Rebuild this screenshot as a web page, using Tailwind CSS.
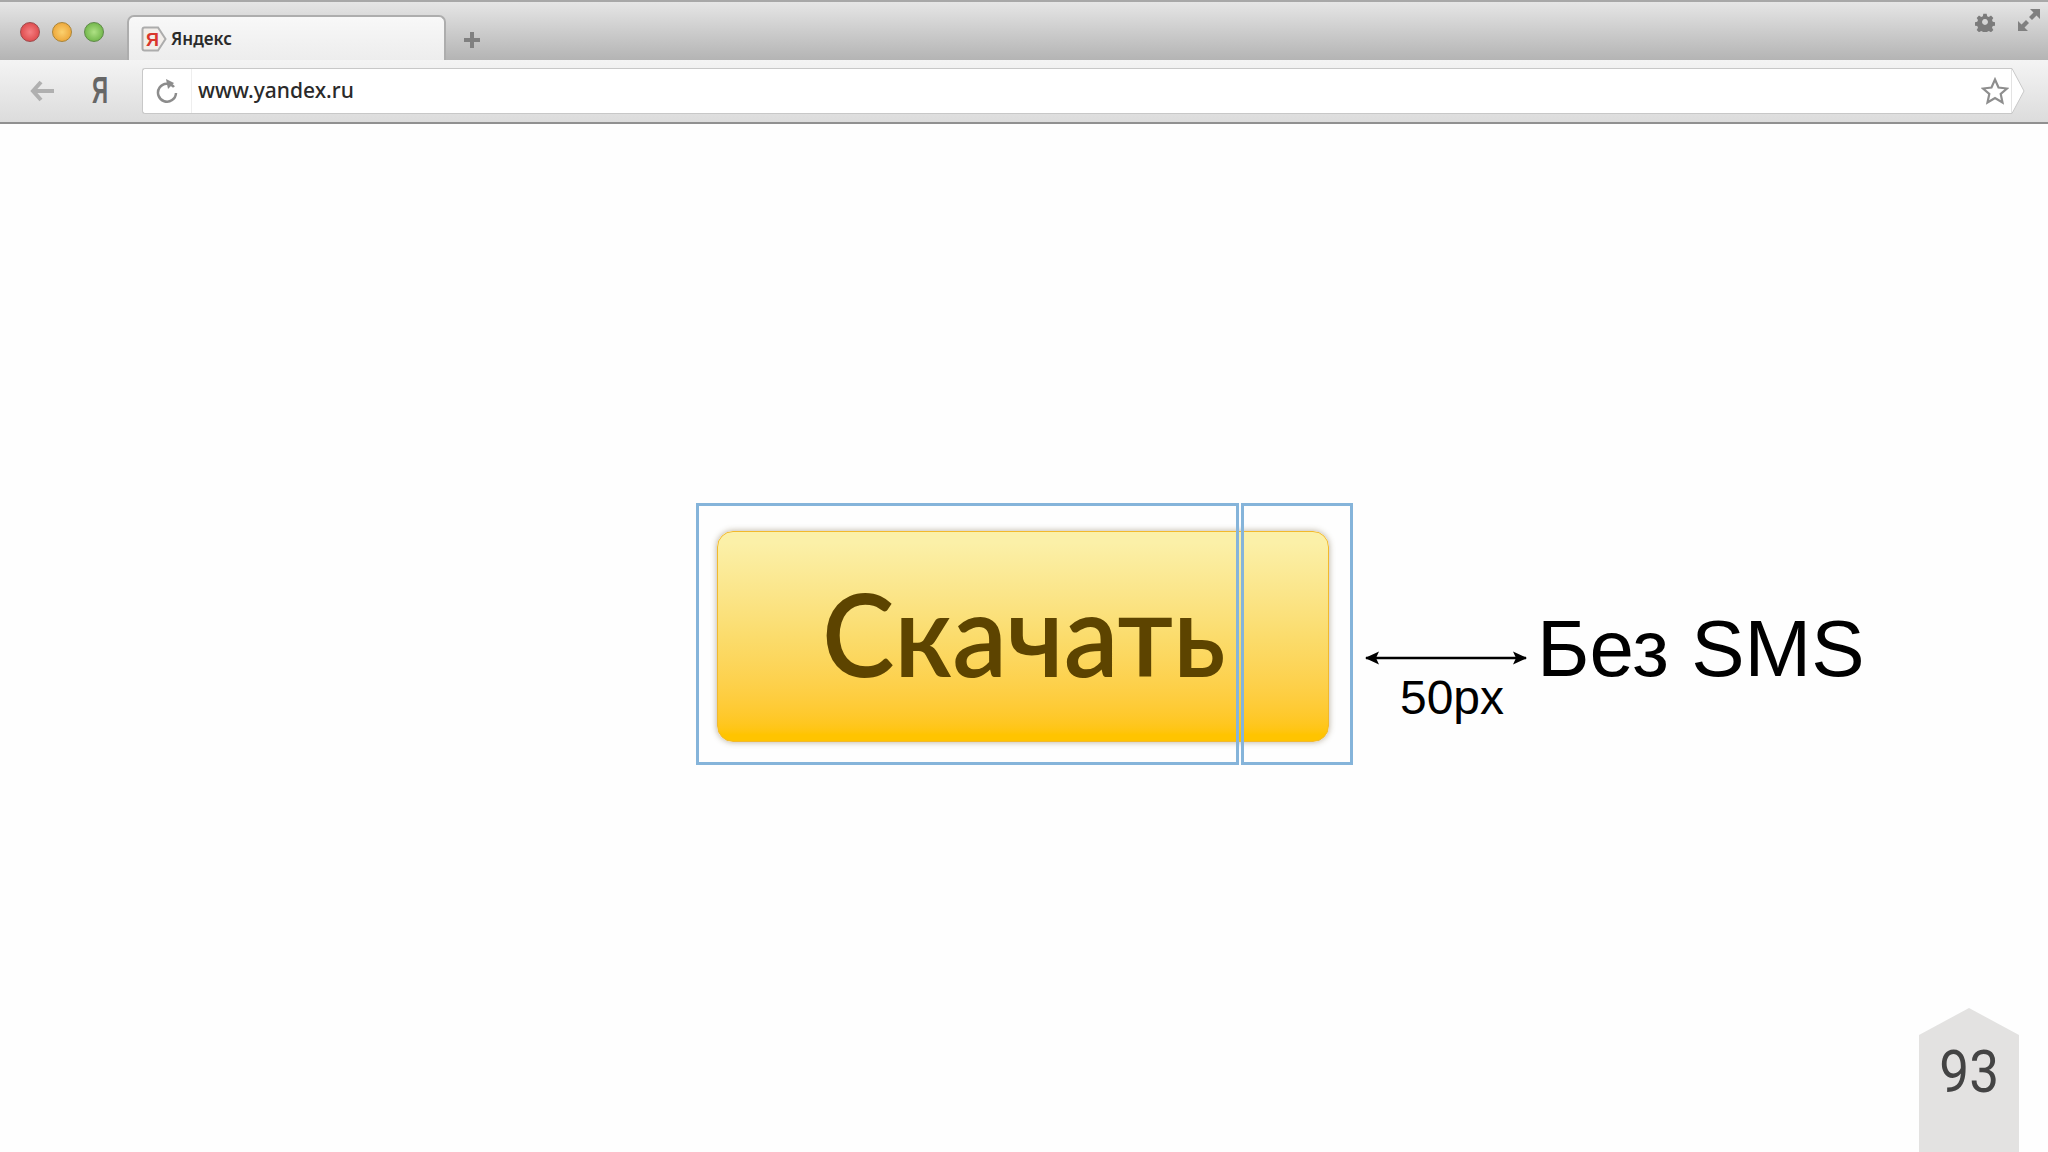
<!DOCTYPE html>
<html><head><meta charset="utf-8"><script src="https://cdn.jsdelivr.net/npm/@tailwindcss/browser@4"></script></head>
<body class="bg-white">
<div class="relative w-[2048px] h-[1152px] overflow-hidden bg-[#fefefe] font-['Liberation_Sans',sans-serif]">
  <header class="flex flex-col w-full">
    <div class="h-[60px] flex items-end bg-linear-to-b from-[#e6e6e6] to-[#b4b4b4] border-t-2 border-[#a8a8a8] relative">
      <div class="flex gap-[12px] items-center pl-[20px] w-[127px] self-start mt-[20px]">
        <span class="w-[20px] h-[20px] shrink-0 rounded-full bg-radial from-[#f57f82] to-[#d6353b] border border-[#9c4a4c]"></span>
        <span class="w-[20px] h-[20px] shrink-0 rounded-full bg-radial from-[#fbd16e] to-[#e8991f] border border-[#a98438]"></span>
        <span class="w-[20px] h-[20px] shrink-0 rounded-full bg-radial from-[#aee184] to-[#5ea936] border border-[#5e8a48]"></span>
      </div>
      <div class="w-[319px] h-[45px] rounded-t-[7px] border-2 border-b-0 border-[#adadad] bg-linear-to-b from-[#f8f8f8] to-[#ededed] flex items-center pl-[12px] gap-[4px]">
        <svg width="26" height="26" viewBox="0 0 26 26" class="shrink-0"><path d="M1.500 3.500 Q1.500 1.500 3.500 1.500 H17 L24.500 13 L17 24.500 H3.500 Q1.500 24.500 1.500 22.500Z" fill="#f2eeea" stroke="#acacac" stroke-width="2"/><text x="5" y="20" font-size="18" font-weight="700" fill="#d9362b" font-family="Liberation Sans">Я</text></svg>
        <span class="text-[17px] text-[#2a2a2a] font-['Noto_Sans',sans-serif] font-semibold">Яндекс</span>
      </div>
      <svg width="20" height="20" viewBox="0 0 20 20" class="ml-[16px] mb-[10px]"><path d="M10 2V18M2 10H18" stroke="#808080" stroke-width="4"/></svg>
      <svg width="20" height="20" viewBox="0 0 24 24" class="absolute left-[1975px] top-[10px]"><path fill-rule="evenodd" fill="#7b7b7b" d="M10 2h4l.6 3 2 .9 2.600-1.600 2.800 2.800-1.600 2.600.9 2 3 .6v4l-3 .6-.9 2 1.600 2.600-2.800 2.800-2.600-1.600-2 .9-.6 3h-4l-.6-3-2-.9-2.600 1.600-2.800-2.800 1.600-2.600-.9-2-3-.6v-4l3-.6.9-2-1.600-2.600 2.800-2.800 2.600 1.600 2-.9zM12 8.500a3.500 3.500 0 1 0 .01 0z"/></svg>
      <svg width="24" height="24" viewBox="0 0 24 24" class="absolute left-[2017px] top-[6px]"><path fill="#808080" d="M13 1H23V11L19.500 7.500 15 12 12 9 16.500 4.500zM1 13L1 23H11L7.500 19.500 12 15 9 12 4.500 16.500z"/></svg>
    </div>
    <div class="h-[64px] flex items-center bg-linear-to-b from-[#f4f4f4] to-[#dcdcdc] border-b-2 border-[#909090] pb-[1px]">
      <div class="w-[142px] shrink-0 flex items-center">
        <svg width="24" height="22" viewBox="0 0 24 22" class="ml-[30px]"><path d="M11 2L3 11L11 20M3 11H24" fill="none" stroke="#b0b0b0" stroke-width="4"/></svg>
        <span class="ml-[33px] inline-block text-[36px] leading-none text-[#666] font-['Liberation_Sans',sans-serif] font-bold scale-x-[0.62]">Я</span>
      </div>
      <div class="flex items-center h-[46px] w-[1870px] relative bg-white border border-[#c8c8c8] border-r-0 rounded-l-[3px]">
        <div class="w-[49px] h-full flex items-center justify-center border-r border-[#eeeeee]">
          <svg width="24" height="26" viewBox="0 0 24 26"><path d="M19 9A9 9 0 1 0 21 15" fill="none" stroke="#8c8c8c" stroke-width="2.500"/><path d="M11 1L19 5 13 11z" fill="#8c8c8c"/></svg>
        </div>
        <span class="ml-[6px] text-[21px] text-[#2a2a2a] font-['Noto_Sans',sans-serif] font-medium">www.yandex.ru</span>
        <svg width="28" height="28" viewBox="0 0 28 28" class="ml-auto mr-[3px]"><path d="M14 2.500L17.500 10.500 26 11.500 19.700 17 21.500 25.500 14 21 6.500 25.500 8.300 17 2 11.500 10.500 10.500z" fill="#fff" stroke="#8e8e8e" stroke-width="2.200"/></svg>
        <svg width="14" height="46" viewBox="0 0 14 46" class="absolute -right-[13px] -top-[1px]"><path d="M0 .5H1L13 23 1 45.500H0z" fill="#fff" stroke="#c8c8c8"/></svg>
      </div>
    </div>
  </header>

  <main class="absolute left-[696px] top-[503px] w-[660px] h-[262px]">
    <div class="absolute left-[21px] top-[28px] w-[612px] h-[211px] rounded-[16px] border border-[#f2b92c] bg-linear-to-b from-[#fbf0a8] from-5% via-[#fbdc6c] via-50% to-[#ffc400] to-97% shadow-[0_0_6px_rgba(90,70,30,0.45)] flex items-center pl-[104px]">
      <span class="inline-block mb-[7px] text-[116px] leading-none text-[#5d4400] font-['Lato','Roboto',sans-serif] font-semibold origin-left scale-x-[0.94]">Скачать</span>
    </div>
    <div class="relative flex gap-[2px]">
      <div class="w-[543px] h-[262px] border-[3px] border-[#85b4da]"></div>
      <div class="w-[112px] h-[262px] border-[3px] border-[#85b4da]"></div>
    </div>
  </main>

  <div class="absolute left-[1364px] top-[606px] flex items-start gap-[9px]">
    <div class="flex flex-col items-center w-[164px]">
      <svg width="164" height="20" viewBox="0 0 164 20" class="mt-[42px]"><path d="M2 10H162" stroke="#000" stroke-width="2.500"/><path d="M1 10L15 3.500 12 10 15 16.500zM163 10L149 3.500 152 10 149 16.500z" fill="#000"/></svg>
      <span class="text-[48px] leading-none text-black ml-[12px] mt-[6px]">50px</span>
    </div>
    <span class="text-[80px] leading-none text-black mt-[3px]">Без SMS</span>
  </div>

  <div class="absolute left-[1919px] top-[1008px] w-[100px] h-[144px] bg-[#e3e2e1] [clip-path:polygon(50%_0,100%_27px,100%_100%,0_100%,0_27px)] flex justify-center pt-[34px]">
    <span class="inline-block text-[59px] leading-none text-[#444] font-['Roboto',sans-serif] scale-x-90">93</span>
  </div>
</div>
</body></html>
